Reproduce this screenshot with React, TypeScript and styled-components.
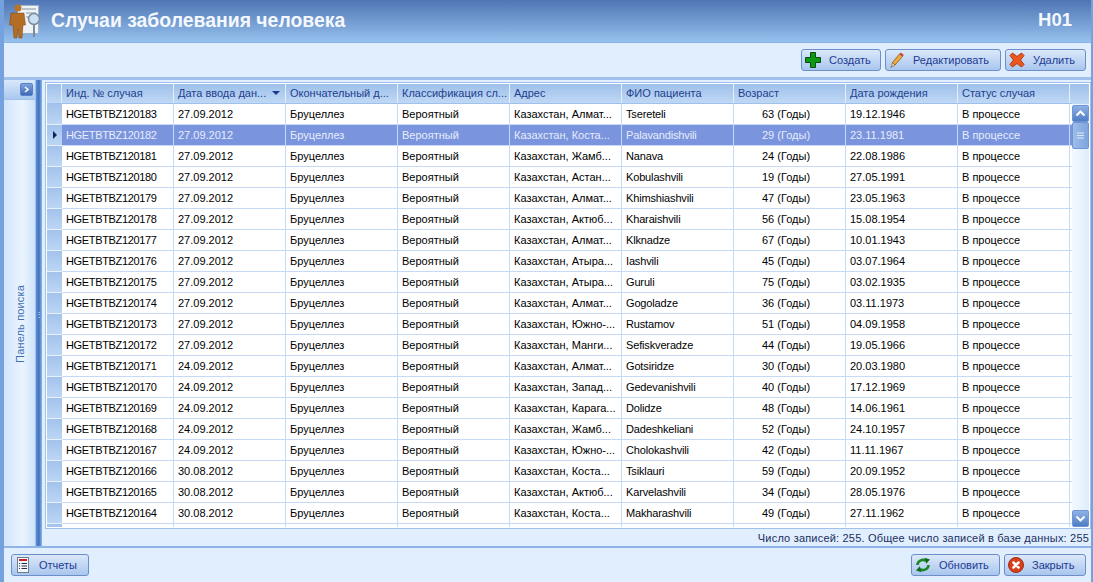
import React from "react";
import styled, { createGlobalStyle } from "styled-components";

const GlobalStyle = createGlobalStyle`
  html, body {
    margin: 0;
    padding: 0;
    background: #e0eefe;
    overflow: hidden;
  }
  body {
    font-family: "Liberation Sans", Arial, sans-serif;
  }
`;

const COLUMNS = "112px 112px 112px 112px 112px 112px 112px 112px 112px";

const Page = styled.div`
  width: 1093px;
  height: 582px;
  box-sizing: border-box;
  display: flex;
  flex-direction: column;
  border-left: 4px solid #75a2df;
  border-right: 2px solid #75a2df;
  background: #e0eefe;
  overflow: hidden;
`;

const Header = styled.div`
  height: 43px;
  flex: none;
  margin-left: -4px;
  margin-right: -2px;
  display: flex;
  align-items: center;
  justify-content: space-between;
  padding: 0 21px 2px 8px;
  box-sizing: border-box;
  background: linear-gradient(#4f75b3, #95c1ee);
  border-bottom: 1px solid #8fb5e8;
`;

const HeaderLeft = styled.div`
  display: flex;
  align-items: center;
  gap: 10px;
`;

const Title = styled.div`
  font-size: 19.4px;
  font-weight: bold;
  color: #f4f8fe;
`;

const Code = styled.div`
  font-size: 18.500px;
  font-weight: bold;
  color: #f4f8fe;
`;

const Toolbar = styled.div`
  height: 34px;
  flex: none;
  display: flex;
  justify-content: flex-end;
  align-items: center;
  gap: 4px;
  padding: 0 5px 1px 0;
  box-sizing: border-box;
`;

const Button = styled.div<{ $width: number }>`
  width: ${(p) => p.$width}px;
  height: 22px;
  box-sizing: border-box;
  display: flex;
  align-items: center;
  gap: 8px;
  padding-left: 3px;
  border: 1px solid #6d8fc9;
  border-radius: 3px;
  background: linear-gradient(#dbe8fa, #a9c6ee);
  color: #1f3a93;
  font-size: 11px;
  svg {
    flex: none;
  }
`;

const ButtonLabel = styled.span`
  white-space: nowrap;
`;

const Main = styled.div`
  flex: 1;
  min-height: 0;
  display: flex;
  border-top: 3px solid #9fc1ec;
`;

const SidePanel = styled.div`
  width: 32px;
  flex: none;
  display: flex;
  flex-direction: column;
  background: linear-gradient(90deg, #d3e5fb, #eaf4ff 60%, #cfe2fa);
  border-right: 1px solid #9fc1ec;
  box-sizing: border-box;
`;

const SideHead = styled.div`
  height: 20px;
  flex: none;
  display: flex;
  justify-content: flex-end;
  align-items: center;
  padding-right: 2px;
  box-sizing: border-box;
  background: linear-gradient(#d9e8fb, #a9c8ef);
  border-bottom: 1px solid #9fc1ec;
`;

const ExpandButton = styled.div`
  width: 13px;
  height: 13px;
  border-radius: 2px;
  display: flex;
  align-items: center;
  justify-content: center;
  background: linear-gradient(#7fa3de, #3f69b8);
  border: 1px solid #5a82c8;
  box-sizing: border-box;
`;

const SideLabelWrap = styled.div`
  flex: 1;
  display: flex;
  align-items: center;
  justify-content: center;
`;

const SideLabel = styled.span`
  writing-mode: vertical-rl;
  transform: rotate(180deg);
  font-size: 11px;
  letter-spacing: 0.15px;
  color: #3f6fb5;
  white-space: nowrap;
`;

const Splitter = styled.div`
  width: 6px;
  flex: none;
  display: flex;
  align-items: center;
  justify-content: center;
  background: linear-gradient(90deg, #5f8ed2, #3f74c0 50%, #8fb5e8);
  color: #dce9fb;
  font-size: 8px;
`;

const Content = styled.div`
  flex: 1;
  min-width: 0;
  display: flex;
  flex-direction: column;
  padding: 2px 0 0 3px;
`;

const GridFrame = styled.div`
  height: 447px;
  flex: none;
  box-sizing: border-box;
  border: 1px solid #9fc1ec;
  padding: 1px;
  background: #ffffff;
  display: flex;
  overflow: hidden;
`;

const GridBody = styled.div`
  flex: 1;
  min-width: 0;
  overflow: hidden;
`;

const HeadRow = styled.div`
  display: grid;
  grid-template-columns: 15px ${COLUMNS};
  height: 20px;
  background: linear-gradient(#9ec0ea, #c0d8f5);
  border-bottom: 1px solid #9fc1ec;
  box-sizing: border-box;
`;

const HeadCell = styled.div`
  display: flex;
  align-items: center;
  justify-content: space-between;
  padding: 0 5px 1px 4px;
  box-sizing: border-box;
  border-right: 1px solid #e6f0fd;
  font-size: 11px;
  color: #23408f;
  white-space: nowrap;
  overflow: hidden;
`;

const SortArrow = styled.span`
  width: 0;
  height: 0;
  border-left: 4px solid transparent;
  border-right: 4px solid transparent;
  border-top: 4px solid #1c3a8c;
`;

const Row = styled.div<{ $selected?: boolean }>`
  display: grid;
  grid-template-columns: 15px ${COLUMNS};
  height: 21px;
  box-sizing: border-box;
  border-bottom: 1px solid #c6daf5;
  background: ${(p) => (p.$selected ? "#7b94de" : "#ffffff")};
  color: ${(p) => (p.$selected ? "#e6edfb" : "#000000")};
`;

const RowHead = styled.div`
  display: flex;
  align-items: center;
  justify-content: center;
  background: linear-gradient(#a3c3ec, #bcd5f4);
  border-bottom: 1px solid #e6f0fd;
  margin-bottom: -1px;
`;

const RowMarker = styled.span`
  width: 0;
  height: 0;
  border-top: 4px solid transparent;
  border-bottom: 4px solid transparent;
  border-left: 4px solid #10245f;
`;

const Cell = styled.div<{ $indent?: number; $tracking?: number }>`
  display: flex;
  align-items: center;
  padding-left: ${(p) => p.$indent ?? 4}px;
  box-sizing: border-box;
  border-right: 1px solid #c6daf5;
  font-size: 11px;
  letter-spacing: ${(p) => p.$tracking ?? 0}px;
  white-space: nowrap;
  overflow: hidden;
`;

const ScrollBar = styled.div`
  width: 17px;
  flex: none;
  display: flex;
  flex-direction: column;
  background: linear-gradient(#9ec0ea, #c0d8f5) top / 100% 20px no-repeat,
    linear-gradient(90deg, #f4f9ff, #dfecfd);
  padding-top: 21px;
  box-sizing: border-box;
`;

const ScrollButton = styled.div`
  width: 17px;
  height: 17px;
  flex: none;
  box-sizing: border-box;
  border-radius: 2px;
  border: 1px solid #6f95d4;
  background: linear-gradient(#8fb2e6, #4f7cc4);
  display: flex;
  align-items: center;
  justify-content: center;
`;

const ScrollThumb = styled.div`
  width: 17px;
  height: 27px;
  flex: none;
  box-sizing: border-box;
  border-radius: 2px;
  border: 1px solid #6f95d4;
  background: linear-gradient(90deg, #9dbdea, #7fa4de);
  display: flex;
  align-items: center;
  justify-content: center;
`;

const ScrollSpacer = styled.div`
  flex: 1;
`;

const StatusBar = styled.div`
  height: 19px;
  flex: none;
  box-sizing: border-box;
  display: flex;
  align-items: center;
  justify-content: flex-end;
  font-size: 11px;
  letter-spacing: 0.19px;
  color: #1a2f5f;
  padding: 0 2px 0 0;
  border-bottom: 2px solid #8fb5e8;
  margin-left: -41px;
`;

const Footer = styled.div`
  height: 34px;
  flex: none;
  display: flex;
  justify-content: space-between;
  align-items: center;
  padding: 0 5px 0 7px;
  box-sizing: border-box;
`;

const FooterGroup = styled.div`
  display: flex;
  gap: 4px;
`;

const PlusIcon = () => (
  <svg width="16" height="16" viewBox="0 0 16 16">
    <path
      d="M5.500.5h5v5h5v5h-5v5h-5v-5h-5v-5h5z"
      fill="#0c9a14"
      stroke="#0b4d10"
      strokeWidth="1"
    />
  </svg>
);

const PencilIcon = () => (
  <svg width="16" height="16" viewBox="0 0 16 16">
    <path d="M3.500 10.500 10.500 2l3 2.500L6 13z" fill="#eda93a" stroke="#8d5a1a" strokeWidth="0.8" />
    <path d="M10.500 2 11.800.6l3 2.500-1.300 1.400z" fill="#c8413a" />
    <path d="M3.500 10.500 2 15.500 6 13z" fill="#e8d2a8" stroke="#5a3a1a" strokeWidth="0.5" />
  </svg>
);

const CrossIcon = () => (
  <svg width="16" height="16" viewBox="0 0 16 16">
    <path
      d="M1 3.500 3.500 1 8 4.500 12.500 1 15 3.500 11.500 8 15 12.500 12.500 15 8 11.500 3.500 15 1 12.500 4.500 8z"
      fill="#f0551c"
      stroke="#b0390f"
      strokeWidth="1"
      strokeLinejoin="round"
    />
  </svg>
);

const ReportIcon = () => (
  <svg width="16" height="16" viewBox="-2 0 16 16">
    <rect x="0.500" y="0.500" width="11" height="15" fill="#f5f7fa" stroke="#6f7f93" />
    <rect x="2" y="2" width="8" height="2" fill="#c8202a" />
    <path d="M2 6.500h1M4.500 6.500h5.500M2 9h1M4.500 9h5.500M2 11.500h1M4.500 11.500h5.500" stroke="#20304f" />
  </svg>
);

const RefreshIcon = () => (
  <svg width="16" height="16" viewBox="0 0 16 16">
    <path d="M2.500 8A5.500 5 0 0 1 11 3.800" fill="none" stroke="#1a8a26" strokeWidth="2.600" />
    <path d="M9.500.8 15 2.600l-3.800 4.200z" fill="#116b1c" />
    <path d="M13.500 8A5.500 5 0 0 1 5 12.200" fill="none" stroke="#1a8a26" strokeWidth="2.600" />
    <path d="M6.500 15.200 1 13.400l3.800-4.200z" fill="#116b1c" />
  </svg>
);

const CloseIcon = () => (
  <svg width="16" height="16" viewBox="0 0 16 16">
    <circle cx="8" cy="8" r="7.500" fill="#d8401c" stroke="#a32a10" />
    <path d="M5.500 5.500l5 5M10.500 5.500l-5 5" stroke="#ffffff" strokeWidth="2.500" strokeLinecap="round" />
  </svg>
);

const PersonIcon = () => (
  <svg width="33" height="37" viewBox="0 0 33 37">
    <rect x="9.500" y="3.500" width="21" height="28" fill="#eef3f8" stroke="#9fb2c8" />
    <path d="M14 7h14M18 11h10M18 15h4" stroke="#b9c4d1" strokeWidth="2" />
    <circle cx="10" cy="6" r="3.500" fill="#b9742a" />
    <path d="M3 11h13l1.500 12H15l-1 13h-3l-1-9-1 9H6L5 23H1.500z" fill="#b36d25" stroke="#7b4712" strokeWidth="0.5" />
    <circle cx="26" cy="17" r="5.500" fill="#c9dff2" stroke="#7d8c9c" strokeWidth="1.500" />
    <rect x="25" y="22" width="2" height="13" fill="#7d8c9c" />
  </svg>
);

const headers = [
  "Инд. № случая",
  "Дата ввода дан...",
  "Окончательный д...",
  "Классификация сл...",
  "Адрес",
  "ФИО пациента",
  "Возраст",
  "Дата рождения",
  "Статус случая",
];

interface ICase {
  id: string;
  entered: string;
  region: string;
  name: string;
  age: number;
  born: string;
}

const cases: ICase[] = [
  { id: "120183", entered: "27.09.2012", region: "Алмат", name: "Tsereteli", age: 63, born: "19.12.1946" },
  { id: "120182", entered: "27.09.2012", region: "Коста", name: "Palavandishvili", age: 29, born: "23.11.1981" },
  { id: "120181", entered: "27.09.2012", region: "Жамб", name: "Nanava", age: 24, born: "22.08.1986" },
  { id: "120180", entered: "27.09.2012", region: "Астан", name: "Kobulashvili", age: 19, born: "27.05.1991" },
  { id: "120179", entered: "27.09.2012", region: "Алмат", name: "Khimshiashvili", age: 47, born: "23.05.1963" },
  { id: "120178", entered: "27.09.2012", region: "Актюб", name: "Kharaishvili", age: 56, born: "15.08.1954" },
  { id: "120177", entered: "27.09.2012", region: "Алмат", name: "Klknadze", age: 67, born: "10.01.1943" },
  { id: "120176", entered: "27.09.2012", region: "Атыра", name: "Iashvili", age: 45, born: "03.07.1964" },
  { id: "120175", entered: "27.09.2012", region: "Атыра", name: "Guruli", age: 75, born: "03.02.1935" },
  { id: "120174", entered: "27.09.2012", region: "Алмат", name: "Gogoladze", age: 36, born: "03.11.1973" },
  { id: "120173", entered: "27.09.2012", region: "Южно-", name: "Rustamov", age: 51, born: "04.09.1958" },
  { id: "120172", entered: "27.09.2012", region: "Манги", name: "Sefiskveradze", age: 44, born: "19.05.1966" },
  { id: "120171", entered: "24.09.2012", region: "Алмат", name: "Gotsiridze", age: 30, born: "20.03.1980" },
  { id: "120170", entered: "24.09.2012", region: "Запад", name: "Gedevanishvili", age: 40, born: "17.12.1969" },
  { id: "120169", entered: "24.09.2012", region: "Карага", name: "Dolidze", age: 48, born: "14.06.1961" },
  { id: "120168", entered: "24.09.2012", region: "Жамб", name: "Dadeshkeliani", age: 52, born: "24.10.1957" },
  { id: "120167", entered: "24.09.2012", region: "Южно-", name: "Cholokashvili", age: 42, born: "11.11.1967" },
  { id: "120166", entered: "30.08.2012", region: "Коста", name: "Tsiklauri", age: 59, born: "20.09.1952" },
  { id: "120165", entered: "30.08.2012", region: "Актюб", name: "Karvelashvili", age: 34, born: "28.05.1976" },
  { id: "120164", entered: "30.08.2012", region: "Коста", name: "Makharashvili", age: 49, born: "27.11.1962" },
];

export default function App() {
  return (
    <>
      <GlobalStyle />
      <Page>
        <Header>
          <HeaderLeft>
            <PersonIcon />
            <Title>Случаи заболевания человека</Title>
          </HeaderLeft>
          <Code>H01</Code>
        </Header>
        <Toolbar>
          <Button $width={80}>
            <PlusIcon />
            <ButtonLabel>Создать</ButtonLabel>
          </Button>
          <Button $width={116}>
            <PencilIcon />
            <ButtonLabel>Редактировать</ButtonLabel>
          </Button>
          <Button $width={81}>
            <CrossIcon />
            <ButtonLabel>Удалить</ButtonLabel>
          </Button>
        </Toolbar>
        <Main>
          <SidePanel>
            <SideHead>
              <ExpandButton>
                <svg width="7" height="7" viewBox="0 0 7 7">
                  <path d="M2 1l3 2.500L2 6" fill="none" stroke="#ffffff" strokeWidth="1.500" />
                </svg>
              </ExpandButton>
            </SideHead>
            <SideLabelWrap>
              <SideLabel>Панель поиска</SideLabel>
            </SideLabelWrap>
          </SidePanel>
          <Splitter>⋮</Splitter>
          <Content>
            <GridFrame>
              <GridBody>
                <HeadRow>
                  <HeadCell />
                  {headers.map((title, i) => (
                    <HeadCell key={title}>
                      {title}
                      {i === 1 && <SortArrow />}
                    </HeadCell>
                  ))}
                </HeadRow>
                {cases.map((item, i) => (
                  <Row key={item.id} $selected={i === 1}>
                    <RowHead>{i === 1 && <RowMarker />}</RowHead>
                    <Cell $tracking={-0.35}>HGETBTBZ{item.id}</Cell>
                    <Cell>{item.entered}</Cell>
                    <Cell>Бруцеллез</Cell>
                    <Cell>Вероятный</Cell>
                    <Cell>Казахстан, {item.region}...</Cell>
                    <Cell $tracking={-0.15}>{item.name}</Cell>
                    <Cell $indent={28}>{item.age} (Годы)</Cell>
                    <Cell>{item.born}</Cell>
                    <Cell>В процессе</Cell>
                  </Row>
                ))}
                <Row>
                  <RowHead />
                  {headers.map((title) => (
                    <Cell key={title} />
                  ))}
                </Row>
              </GridBody>
              <ScrollBar>
                <ScrollButton>
                  <svg width="11" height="7" viewBox="0 0 11 7">
                    <path d="M1.500 5.500l4-4 4 4" fill="none" stroke="#ffffff" strokeWidth="2" />
                  </svg>
                </ScrollButton>
                <ScrollThumb>
                  <svg width="7" height="7" viewBox="0 0 7 7">
                    <path d="M0 1h7M0 3.500h7M0 6h7" stroke="#dce9fb" />
                  </svg>
                </ScrollThumb>
                <ScrollSpacer />
                <ScrollButton>
                  <svg width="11" height="7" viewBox="0 0 11 7">
                    <path d="M1.500 1.500l4 4 4-4" fill="none" stroke="#ffffff" strokeWidth="2" />
                  </svg>
                </ScrollButton>
              </ScrollBar>
            </GridFrame>
            <StatusBar>Число записей: 255. Общее число записей в базе данных: 255</StatusBar>
          </Content>
        </Main>
        <Footer>
          <Button $width={78}>
            <ReportIcon />
            <ButtonLabel>Отчеты</ButtonLabel>
          </Button>
          <FooterGroup>
            <Button $width={89}>
              <RefreshIcon />
              <ButtonLabel>Обновить</ButtonLabel>
            </Button>
            <Button $width={82}>
              <CloseIcon />
              <ButtonLabel>Закрыть</ButtonLabel>
            </Button>
          </FooterGroup>
        </Footer>
      </Page>
    </>
  );
}
